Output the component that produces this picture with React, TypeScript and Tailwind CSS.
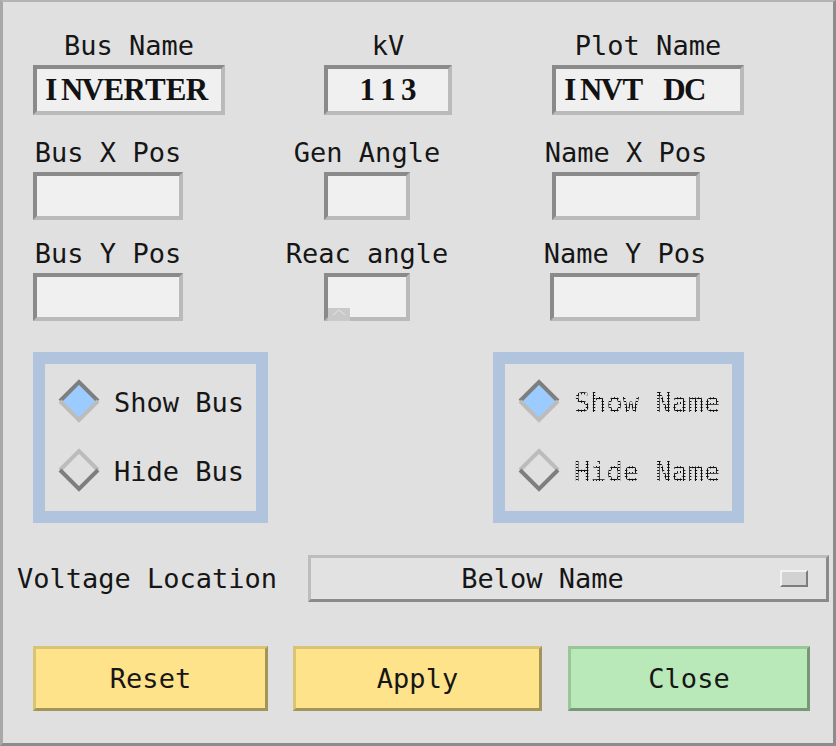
import React from "react";

const MONO = "font-['DejaVu_Sans_Mono',monospace]";
const LABEL = `${MONO} text-[27px] leading-[30px] text-[#161616] whitespace-nowrap`;

function SerifValue({ text }: { text: string }) {
  return (
    <span className="flex font-['Liberation_Serif',serif] font-bold text-[31px] leading-[30px] text-[#121212]">
      {text.split("").map((c, i) => (
        <span key={i} className="flex justify-center w-[20.8px]">
          {c === " " ? "\u00a0" : c}
        </span>
      ))}
    </span>
  );
}

function Field({
  label,
  w,
  h,
  align,
  children,
}: {
  label: string;
  w: string;
  h: string;
  align?: string;
  children?: React.ReactNode;
}) {
  return (
    <div className={`flex flex-col items-center ${w}`}>
      <div className={LABEL}>{label}</div>
      <div
        className={`mt-[4px] relative flex items-center ${align ?? "justify-start pl-[4px]"} ${w} ${h} border-[4px] border-t-[#8a8a8a] border-l-[#8a8a8a] border-r-[#bababa] border-b-[#bababa] bg-[#f0f0f0]`}
      >
        {children}
      </div>
    </div>
  );
}

function Diamond({ selected }: { selected: boolean }) {
  const top = selected ? "#7e7e7e" : "#bcbcbc";
  const bottom = selected ? "#bcbcbc" : "#7e7e7e";
  return (
    <svg width="44" height="44" viewBox="0 0 44 44" className="shrink-0">
      <polygon points="22,3 41,22 22,41 3,22" fill={selected ? "#9cccff" : "#e0e0e0"} />
      <polyline points="3,22 22,3 41,22" fill="none" stroke={top} strokeWidth="4" strokeLinejoin="miter" />
      <polyline points="3,22 22,41 41,22" fill="none" stroke={bottom} strokeWidth="4" strokeLinejoin="miter" />
    </svg>
  );
}

function RadioOption({ label, selected, disabled }: { label: string; selected: boolean; disabled?: boolean }) {
  return (
    <div className="flex items-center h-[44px] gap-[13px]">
      <Diamond selected={selected} />
      <span
        className={`${LABEL} mt-[4px] ${
          disabled
            ? "text-transparent bg-clip-text bg-[radial-gradient(circle,#101010_1px,transparent_1.4px)] bg-[length:3px_3px]"
            : ""
        }`}
      >
        {label}
      </span>
    </div>
  );
}

function RadioBox({ w, children }: { w: string; children: React.ReactNode }) {
  return (
    <div className={`${w} h-[171px] border-[12px] border-[#b0c4de] bg-[#e0e0e0] flex flex-col pt-[15px] pl-[12px] gap-[25px]`}>
      {children}
    </div>
  );
}

function Button({ label, w, tone }: { label: string; w: string; tone: "yellow" | "green" }) {
  const cls =
    tone === "yellow"
      ? "bg-[#fee38b] border-t-[#d8c474] border-l-[#d8c474] border-b-[#a39459] border-r-[#a39459]"
      : "bg-[#b9e8b9] border-t-[#98c898] border-l-[#98c898] border-b-[#779777] border-r-[#779777]";
  return (
    <div className={`${w} h-[65px] border-[3px] ${cls} flex items-center justify-center`}>
      <span className={LABEL}>{label}</span>
    </div>
  );
}

export default function App() {
  return (
    <div className="w-[836px] h-[746px] bg-[#e0e0e0] border-l-[3px] border-t-[2px] border-r-[3px] border-b-[3px] border-l-[#a8a8a8] border-t-[#b4b4b4] border-r-[#8c8c8c] border-b-[#8c8c8c] flex flex-col">
      {/* Row 1 */}
      <div className="grid grid-cols-[291px_228px_1fr] pl-[30px] pt-[29px]">
        <Field label="Bus Name" w="w-[192px]" h="h-[50px]">
          <SerifValue text="INVERTER" />
        </Field>
        <Field label="kV" w="w-[128px]" h="h-[50px]" align="justify-center">
          <SerifValue text="113" />
        </Field>
        <Field label="Plot Name" w="w-[192px]" h="h-[50px]">
          <SerifValue text="INVT DC" />
        </Field>
      </div>
      {/* Row 2 */}
      <div className="grid grid-cols-[291px_228px_1fr] pl-[30px] mt-[23px]">
        <Field label="Bus X Pos" w="w-[150px]" h="h-[48px]" />
        <Field label="Gen Angle" w="w-[86px]" h="h-[48px]" />
        <Field label="Name X Pos" w="w-[148px]" h="h-[48px]" />
      </div>
      {/* Row 3 */}
      <div className="grid grid-cols-[291px_226px_1fr] pl-[30px] mt-[19px]">
        <Field label="Bus Y Pos" w="w-[150px]" h="h-[48px]" />
        <Field label="Reac angle" w="w-[86px]" h="h-[48px]">
          <div className="absolute left-[0px] bottom-[-4px] w-[22px] h-[13px] bg-[#c9c9c9] flex items-start justify-center">
            <svg width="16" height="8" viewBox="0 0 16 8">
              <polyline points="2,7 8,2 14,7" fill="none" stroke="#dadada" strokeWidth="1.5" />
            </svg>
          </div>
        </Field>
        <Field label="Name Y Pos" w="w-[150px]" h="h-[48px]" />
      </div>

      {/* Radio groups */}
      <div className="flex pl-[30px] mt-[31px] gap-[225px]">
        <RadioBox w="w-[235px]">
          <RadioOption label="Show Bus" selected />
          <RadioOption label="Hide Bus" selected={false} />
        </RadioBox>
        <RadioBox w="w-[251px]">
          <RadioOption label="Show Name" selected disabled />
          <RadioOption label="Hide Name" selected={false} disabled />
        </RadioBox>
      </div>

      {/* Voltage location */}
      <div className="flex items-center pl-[14px] mt-[32px]">
        <span className={LABEL}>Voltage Location</span>
        <div className="ml-[31px] w-[521px] h-[47px] border-[3px] border-t-[#bdbdbd] border-l-[#bdbdbd] border-b-[#8a8a8a] border-r-[#8a8a8a] bg-[#e2e2e2] flex items-center">
          <span className={`${LABEL} flex-1 text-center pr-[6px]`}>Below Name</span>
          <div className="w-[28px] h-[17px] mr-[18px] border-[2px] border-t-[#f2f2f2] border-l-[#f2f2f2] border-b-[#7c7c7c] border-r-[#7c7c7c] bg-[#d2d2d2]" />
        </div>
      </div>

      {/* Buttons */}
      <div className="flex pl-[30px] mt-[44px]">
        <Button label="Reset" w="w-[235px]" tone="yellow" />
        <div className="ml-[25px]">
          <Button label="Apply" w="w-[249px]" tone="yellow" />
        </div>
        <div className="ml-[26px]">
          <Button label="Close" w="w-[242px]" tone="green" />
        </div>
      </div>
    </div>
  );
}
